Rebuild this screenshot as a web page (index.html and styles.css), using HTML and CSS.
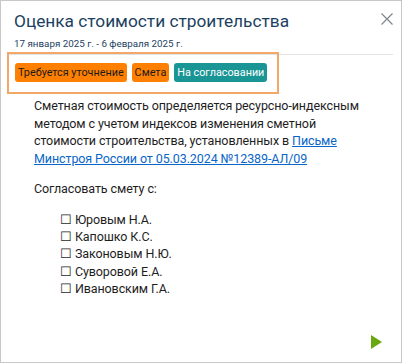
FILE: index.html
```html
<!DOCTYPE html>
<html lang="ru">
<head>
<meta charset="utf-8">
<link rel="stylesheet" href="styles.css">
</head>
<body>
<div class="card">
  <header class="head">
    <div class="titles">
      <h1 class="title">Оценка стоимости строительства</h1>
      <div class="date">17 января 2025 г. - 6 февраля 2025 г.</div>
    </div>
    <svg class="close" width="12" height="12" viewBox="0 0 12 12"><path d="M0.5 0.5L11.5 11.5M11.5 0.5L0.5 11.5" stroke="#7f868c" stroke-width="1.2" fill="none"/></svg>
  </header>
  <div class="rule"></div>
  <div class="tagbox">
    <span class="tag orange">Требуется уточнение</span>
    <span class="tag orange">Смета</span>
    <span class="tag teal">На согласовании</span>
  </div>
  <div class="body">
    <p class="para">Сметная стоимость определяется ресурсно-индексным методом с учетом индексов изменения сметной стоимости строительства, установленных в <a href="#" class="link">Письме Минстроя России от 05.03.2024 №12389-АЛ/09</a></p>
    <p class="para">Согласовать смету с:</p>
    <ul class="list">
      <li>☐ Юровым Н.А.</li>
      <li>☐ Капошко К.С.</li>
      <li>☐ Законовым Н.Ю.</li>
      <li>☐ Суворовой Е.А.</li>
      <li>☐ Ивановским Г.А.</li>
    </ul>
  </div>
  <div class="foot">
    <svg class="play" width="11" height="14" viewBox="0 0 11 14"><path d="M0 0L11 7L0 14Z" fill="#6aa812"/></svg>
  </div>
</div>
</body>
</html>
```
FILE: styles.css
```css
html, body {
  margin: 0;
  padding: 0;
  background: #fff;
}
body {
  font-family: Roboto, "Noto Sans", sans-serif;
  color: #1e1e1e;
}
.card {
  box-sizing: border-box;
  width: 402px;
  height: 363px;
  border: 1px solid #c8c8c8;
  display: flex;
  flex-direction: column;
  position: relative;
}
.head {
  display: flex;
  justify-content: space-between;
  align-items: flex-start;
  padding: 7px 8px 0 13px;
}
.title {
  margin: 0;
  font-size: 17.3px;
  font-weight: 400;
  color: #1d3f5f;
  line-height: 26px;
}
.date {
  font-size: 9.8px;
  color: #1d3f5f;
  margin-top: 3px;
  line-height: 13px;
}
.close {
  margin-top: 5px;
}
.rule {
  height: 1px;
  background: #e2e2e2;
  margin: 4px 8px 0 7px;
}
.tagbox {
  align-self: flex-start;
  margin: -3px 0 0 6px;
  border: 2px solid #f1a868;
  padding: 9px 10px 10px 6px;
  display: flex;
  gap: 5px;
}
.tag {
  font-size: 10.8px;
  line-height: 19px;
  padding: 0 3px;
  border-radius: 3px;
  white-space: nowrap;
}
.orange {
  background: #ff8000;
  color: #1a1a1a;
}
.teal {
  background: #1a9595;
  color: #fff;
}
.body {
  padding: 0 30px 0 33px;
  font-size: 12.5px;
  letter-spacing: -0.1px;
  line-height: 17.5px;
}
.para {
  margin: 3px 0 13px;
}
.link {
  color: #0a66c8;
  text-decoration: underline;
}
.list {
  list-style: none;
  margin: 4px 0 0;
  padding: 0 0 0 26px;
}
.list li {
  line-height: 17.4px;
}
.foot {
  margin-top: auto;
  display: flex;
  justify-content: flex-end;
  padding: 0 19px 13px 0;
}
```
